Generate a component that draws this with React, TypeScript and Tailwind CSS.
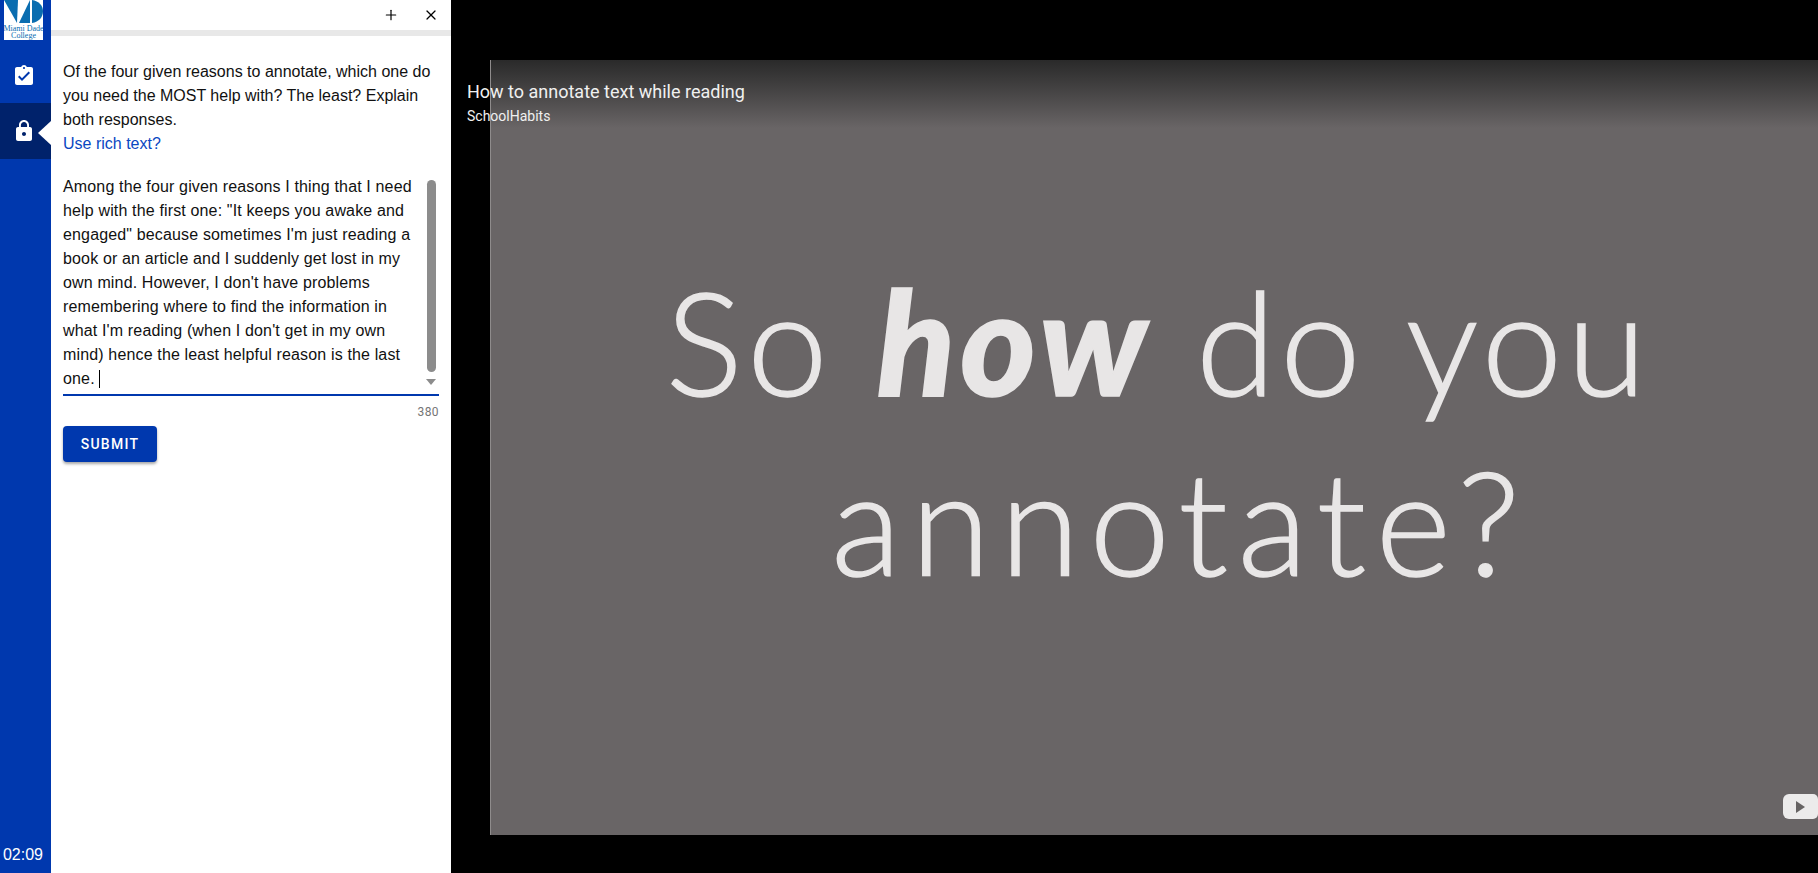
import React from "react";
import { X, Plus } from "lucide-react";

const answer = [
  "Among the four given reasons I thing that I need",
  'help with the first one: "It keeps you awake and',
  "engaged\" because sometimes I'm just reading a",
  "book or an article and I suddenly get lost in my",
  "own mind. However, I don't have problems",
  "remembering where to find the information in",
  "what I'm reading (when I don't get in my own",
  "mind) hence the least helpful reason is the last",
];

function Logo() {
  return (
    <div className="w-[39px] h-[40px] ml-[4px] bg-white flex flex-col items-center overflow-hidden">
      <svg viewBox="0 0 39 23" className="w-[39px] h-[23px] shrink-0">
        <path d="M0 0 L14 0 L13 23 Z" fill="#0a6db0" />
        <path d="M15 23 L26 0 L26 23 Z" fill="#0a6db0" />
        <path d="M28 0 C35 1 39 6 39 11 C39 17 35 22 28 23 Z" fill="#0a6db0" />
      </svg>
      <div className="font-['Liberation_Serif',serif] text-[8px] leading-[7px] text-[#0a6db0] text-center whitespace-nowrap mt-[2px]">
        Miami Dade
        <br />
        College
      </div>
    </div>
  );
}

function ClipboardCheck() {
  return (
    <svg viewBox="0 0 24 24" className="w-[24px] h-[24px]" fill="#ffffff">
      <path d="M19 3h-4.18C14.4 1.84 13.3 1 12 1s-2.4.84-2.82 2H5c-1.1 0-2 .9-2 2v14c0 1.1.9 2 2 2h14c1.1 0 2-.9 2-2V5c0-1.1-.9-2-2-2zm-7 0c.55 0 1 .45 1 1s-.45 1-1 1-1-.45-1-1 .45-1 1-1zm-2 14l-4-4 1.41-1.41L10 14.17l6.59-6.59L18 9l-8 8z" />
    </svg>
  );
}

function Lock() {
  return (
    <svg viewBox="0 0 24 24" className="w-[24px] h-[24px]" fill="#ffffff">
      <path d="M18 8h-1V6c0-2.76-2.24-5-5-5S7 3.24 7 6v2H6c-1.1 0-2 .9-2 2v10c0 1.1.9 2 2 2h12c1.1 0 2-.9 2-2V10c0-1.1-.9-2-2-2zm-6 9c-1.1 0-2-.9-2-2s.9-2 2-2 2 .9 2 2-.9 2-2 2zm3.1-9H8.9V6c0-1.71 1.39-3.1 3.1-3.1 1.71 0 3.1 1.39 3.1 3.1v2z" />
    </svg>
  );
}

export default function App() {
  return (
    <div className="flex h-[873px] w-[1818px] overflow-hidden bg-black font-['Liberation_Sans',Arial,sans-serif]">
      {/* Sidebar */}
      <aside className="w-[51px] shrink-0 bg-[#0038ae] flex flex-col">
        <Logo />
        <div className="h-[63px] flex items-center justify-center pt-[9px] pr-[4px]">
          <ClipboardCheck />
        </div>
        <div className="relative h-[56px] bg-[#00226b] flex items-center justify-center pr-[4px]">
          <Lock />
          <div className="absolute right-0 top-[18px] w-0 h-0 border-y-[12px] border-y-transparent border-r-[13px] border-r-white" />
        </div>
        <div className="mt-auto h-[37px] text-center text-white text-[16px] leading-[24px] pt-[7px] pr-[5px]">02:09</div>
      </aside>

      {/* Question panel */}
      <section className="w-[400px] shrink-0 bg-white flex flex-col">
        <div className="h-[30px] flex items-center justify-end gap-[24px] pr-[12px] text-black">
          <Plus className="w-[16px] h-[16px]" strokeWidth={1.8} />
          <X className="w-[16px] h-[16px]" strokeWidth={1.8} />
        </div>
        <div className="h-[6px] bg-[#e8e8e8]" />
        <div className="pl-[12px] pr-[12px] pt-[24px] text-[16px] leading-[24px] text-[#111111]">
          <p>
            Of the four given reasons to annotate, which one do
            <br />
            you need the MOST help with? The least? Explain
            <br />
            both responses.
          </p>
          <a className="text-[#0a47c2] block">Use rich text?</a>

          <div className="mt-[19px] relative h-[221px] border-b-2 border-[#0038ae] text-[#111111]">
            <div className="whitespace-nowrap tracking-[0.15px]">
              {answer.map((l) => (
                <div key={l}>{l}</div>
              ))}
              <div className="flex items-center">
                one.&nbsp;<span className="inline-block w-[1px] h-[18px] bg-black" />
              </div>
            </div>
            <div className="absolute right-[3px] top-[5px] w-[9px] h-[192px] rounded-[5px] bg-[#8c8c8c]" />
            <div className="absolute right-[3px] top-[204px] w-0 h-0 border-x-[5px] border-x-transparent border-t-[6px] border-t-[#8c8c8c]" />
          </div>
          <div className="text-right text-[12px] leading-[14px] text-[#757575] font-['Roboto',sans-serif] tracking-[0.4px] mt-[9px]">380</div>
          <button className="mt-[7px] w-[94px] h-[36px] rounded-[4px] bg-[#0038ae] text-white text-[14px] font-medium tracking-[1.25px] font-['Roboto',sans-serif] shadow-[0_2px_3px_rgba(0,0,0,0.35)]">
            SUBMIT
          </button>
        </div>
      </section>

      {/* Video */}
      <main className="relative flex-1 min-w-0 pt-[60px] pb-[38px] pl-[39px]">
        <div className="relative h-full bg-[#696566] border-l border-[#8f8c8c] flex flex-col items-center overflow-hidden">
          <div className="absolute top-0 left-0 right-0 h-[68px] bg-gradient-to-b from-[#2a2a2a] to-[#696566]" />
          <div className="pt-[191px] text-[#e8e6e6] font-['Lato',sans-serif] font-light text-[144px] leading-[180px] text-center whitespace-nowrap [-webkit-text-stroke:1.5px_#e8e6e6]">
            <div className="tracking-[5px] pl-[8px]">
              So <b className="font-black italic">how</b> do you
            </div>
            <div className="tracking-[10px] pl-[52px]">annotate?</div>
          </div>
          <div className="absolute right-0 bottom-[16px] w-[35px] h-[25px] bg-[#ecebeb] rounded-l-[6px] rounded-r-[5px] flex items-center justify-center">
            <div className="w-0 h-0 border-y-[6px] border-y-transparent border-l-[9px] border-l-[#666363]" />
          </div>
        </div>
        <div className="absolute left-[16px] top-[79px] font-['Roboto',sans-serif] text-[#f0f0f0]">
          <div className="text-[18px] leading-[26px]">How to annotate text while reading</div>
          <div className="text-[14px] leading-[20px] mt-[1px]">SchoolHabits</div>
        </div>
      </main>
    </div>
  );
}
